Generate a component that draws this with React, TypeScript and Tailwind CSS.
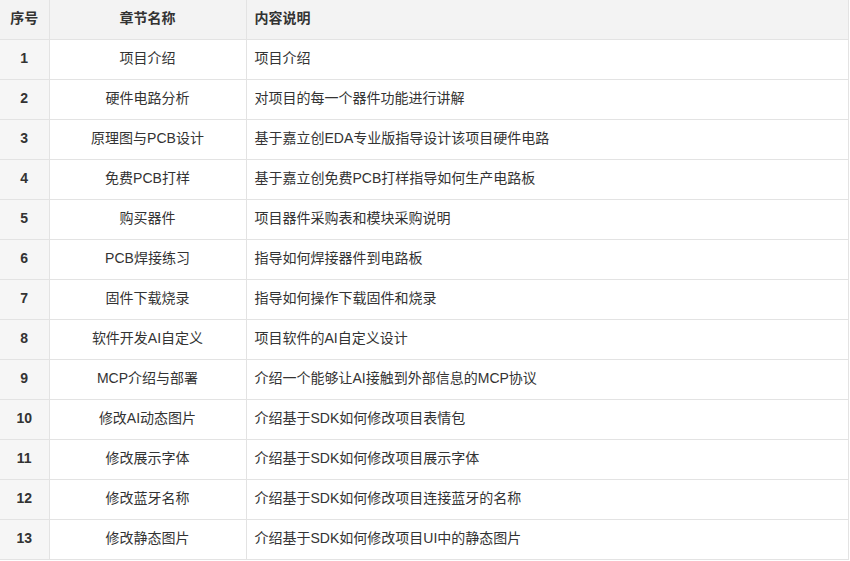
const rows: [string, string][] = [
  ['项目介绍', '项目介绍'],
  ['硬件电路分析', '对项目的每一个器件功能进行讲解'],
  ['原理图与PCB设计', '基于嘉立创EDA专业版指导设计该项目硬件电路'],
  ['免费PCB打样', '基于嘉立创免费PCB打样指导如何生产电路板'],
  ['购买器件', '项目器件采购表和模块采购说明'],
  ['PCB焊接练习', '指导如何焊接器件到电路板'],
  ['固件下载烧录', '指导如何操作下载固件和烧录'],
  ['软件开发AI自定义', '项目软件的AI自定义设计'],
  ['MCP介绍与部署', '介绍一个能够让AI接触到外部信息的MCP协议'],
  ['修改AI动态图片', '介绍基于SDK如何修改项目表情包'],
  ['修改展示字体', '介绍基于SDK如何修改项目展示字体'],
  ['修改蓝牙名称', '介绍基于SDK如何修改项目连接蓝牙的名称'],
  ['修改静态图片', '介绍基于SDK如何修改项目UI中的静态图片'],
];

export default function App() {
  return (
    <div
      className="w-[850px] h-[561px] bg-white text-[14px] text-[#333]"
      style={{ fontFamily: '"Liberation Sans", "Noto Sans CJK SC", sans-serif' }}
    >
      <table className="w-[849px] border-collapse table-fixed">
        <colgroup>
          <col className="w-[49px]" />
          <col className="w-[197px]" />
          <col />
        </colgroup>
        <thead>
          <tr className="h-[39px] bg-[#f3f3f3] font-bold">
            <th className="border border-[#e3e3e3] border-l-0 border-t-0 text-center pb-[2px]">序号</th>
            <th className="border border-[#e3e3e3] border-t-0 text-center pb-[2px]">章节名称</th>
            <th className="border border-[#e3e3e3] border-t-0 text-left px-2 pb-[2px]">内容说明</th>
          </tr>
        </thead>
        <tbody>
          {rows.map(([name, desc], i) => (
            <tr key={i} className="h-[40px]">
              <td className="border border-[#e3e3e3] border-l-0 bg-[#f6f6f6] text-center font-bold pb-[2px]">{i + 1}</td>
              <td className="border border-[#e3e3e3] text-center pb-[2px]">{name}</td>
              <td className="border border-[#e3e3e3] px-2 pb-[2px]">{desc}</td>
            </tr>
          ))}
        </tbody>
      </table>
    </div>
  );
}
